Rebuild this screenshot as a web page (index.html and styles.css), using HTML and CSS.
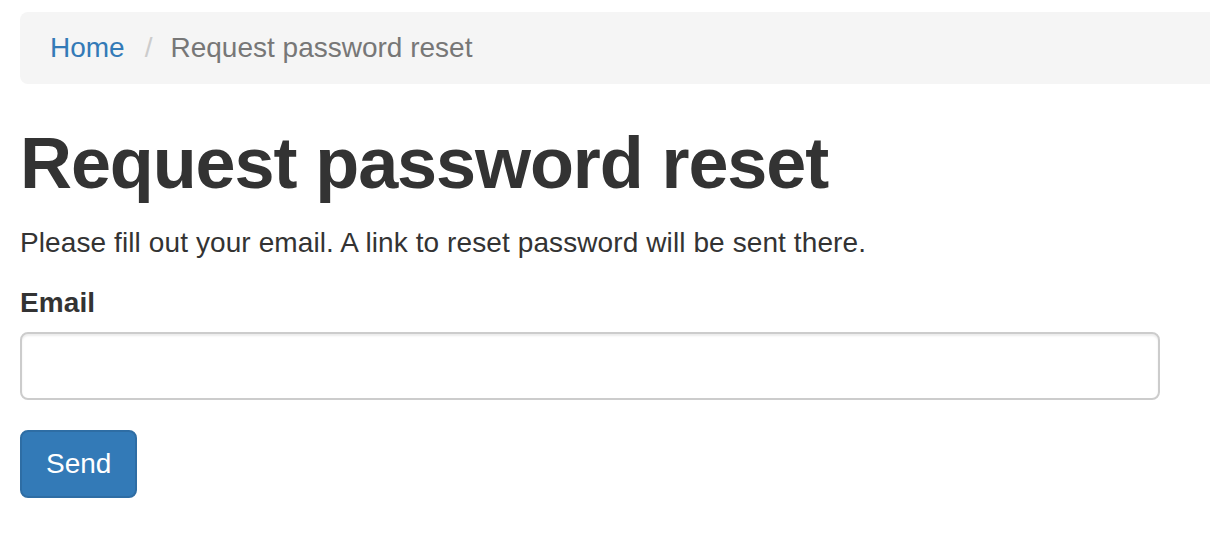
FILE: index.html
```
<!DOCTYPE html>
<html lang="en">
<head>
    <meta charset="UTF-8">
    <meta name="viewport" content="width=device-width, initial-scale=1.0">
    <title>Request password reset</title>
    <link rel="stylesheet" href="styles.css">
</head>
<body>
    <div class="container">
        <ul class="breadcrumb">
            <li><a href="#">Home</a></li>
            <li class="active">Request password reset</li>
        </ul>

        <h1>Request password reset</h1>
        <p>Please fill out your email. A link to reset password will be sent there.</p>

        <form id="resetForm">
            <div class="form-group">
                <label for="email">Email</label>
                <input type="email" id="email" name="email" class="form-control">
            </div>
            <button type="button" class="btn-primary">Send</button>
        </form>
    </div>
</body>
</html>
```

FILE: styles.css
```
html, body {
    margin: 0;
    overflow: hidden;
}
body {
    font-family: "Liberation Sans", Arial, sans-serif;
    font-size: 28px;
    line-height: 40px;
    color: #333;
    background: #fff;
    letter-spacing: 0.1px;
}
.container {
    padding: 12px 0 0 20px;
}
.breadcrumb {
    list-style: none;
    margin: 0 -40px 40px 0;
    padding: 16px 30px;
    background-color: #f5f5f5;
    border-radius: 8px;
    display: flex;
    letter-spacing: 0;
}
.breadcrumb li + li:before {
    content: "/";
    color: #ccc;
    padding: 0 18px 0 20px;
}
.breadcrumb a {
    color: #337ab7;
    text-decoration: none;
}
.breadcrumb .active {
    color: #777;
}
h1 {
    font-size: 72px;
    font-weight: bold;
    line-height: 1.1;
    margin: 40px 0 20px;
    letter-spacing: -1.1px;
}
p {
    margin: 0 0 20px;
}
.form-group {
    margin-bottom: 30px;
}
.form-group label {
    display: block;
    font-weight: bold;
    margin-bottom: 9px;
}
.form-control {
    display: block;
    width: 1140px;
    height: 68px;
    box-sizing: border-box;
    padding: 12px 24px;
    font: inherit;
    border: 2px solid #ccc;
    border-radius: 8px;
    box-shadow: inset 0 2px 2px rgba(0, 0, 0, .075);
    outline: none;
}
.btn-primary {
    font: inherit;
    color: #fff;
    background-color: #337ab7;
    border: 2px solid #2e6da4;
    border-radius: 8px;
    padding: 12px 24px;
    height: 68px;
    cursor: pointer;
}
```
